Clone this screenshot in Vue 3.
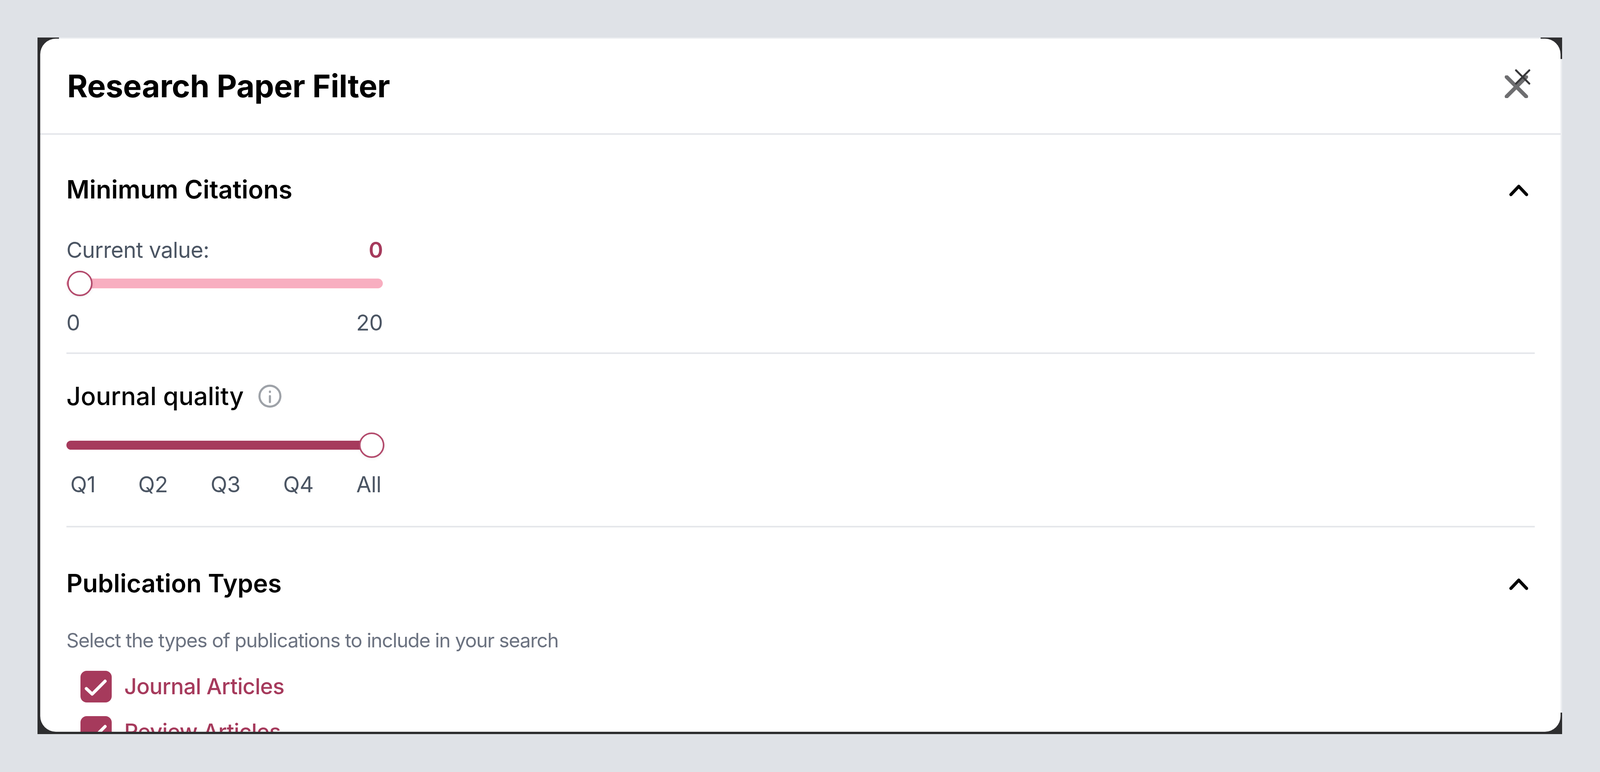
<script setup>
const types = ['Journal Articles', 'Review Articles']
const quality = ['Q1', 'Q2', 'Q3', 'Q4', 'All']
</script>

<template>
  <main class="page">
    <div class="frame">
      <section class="modal">
        <header class="modal-head">
          <h1 class="title">Research Paper Filter</h1>
          <button class="close" aria-label="Close">
            <svg class="close-big" viewBox="0 0 60 58"><path d="M5 4 55 54M55 4 5 54" /></svg>
            <svg class="close-small" viewBox="0 0 40 40"><path d="M3 3 37 37M37 3 3 37" /></svg>
          </button>
        </header>

        <div class="body">
          <div class="section-head first">
            <h2 class="heading">Minimum Citations</h2>
            <svg class="chevron" viewBox="0 0 48 32"><path d="M4 27 24 6 44 27" /></svg>
          </div>
          <div class="slider-block">
            <div class="row value-row">
              <span>Current value:</span>
              <strong class="value">0</strong>
            </div>
            <div class="slider">
              <div class="track light"></div>
              <span class="thumb at-start"></span>
            </div>
            <div class="row ends">
              <span>0</span>
              <span>20</span>
            </div>
          </div>
          <hr class="rule rule-a" />

          <div class="quality-head">
            <h2 class="heading regular">Journal quality</h2>
            <svg class="info" viewBox="0 0 56 56">
              <circle cx="28" cy="28" r="25" />
              <path d="M28 28v14M28 17v1" />
            </svg>
          </div>
          <div class="slider-block narrow">
            <div class="slider">
              <div class="track dark"></div>
              <span class="thumb at-end"></span>
            </div>
            <div class="row ticks">
              <span v-for="q in quality" :key="q">{{ q }}</span>
            </div>
          </div>
          <hr class="rule rule-b" />

          <div class="section-head pub">
            <h2 class="heading">Publication Types</h2>
            <svg class="chevron" viewBox="0 0 48 32"><path d="M4 27 24 6 44 27" /></svg>
          </div>
          <p class="hint">Select the types of publications to include in your search</p>
          <ul class="types">
            <li v-for="t in types" :key="t" class="type">
              <span class="box">
                <svg viewBox="0 0 80 80"><path d="M15 45 30 59 63 26" /></svg>
              </span>
              <span class="type-label">{{ t }}</span>
            </li>
          </ul>
        </div>
      </section>
    </div>
  </main>
</template>

<style>
html, body { margin: 0; background: #dfe2e7; }
</style>

<style scoped>
.page {
  box-sizing: border-box;
  width: 100%;
  min-height: 100vh;
  padding: 96px 97px 97px 96px;
  background: #dfe2e7;
  font-family: Inter, "Noto Sans", sans-serif;
}
.frame {
  box-sizing: border-box;
  height: 1783px;
  padding: 3px 4px 6px 7px;
  background:
    linear-gradient(#eceef1, #eceef1) top center / calc(100% - 110px) 3px no-repeat,
    linear-gradient(#eceef1, #eceef1) right center / 4px calc(100% - 110px) no-repeat,
    #2e2e30;
}
.modal {
  height: 100%;
  background: #fff;
  border-radius: 40px;
  overflow: hidden;
}
.modal-head {
  box-sizing: border-box;
  height: 246px;
  padding: 0 69px;
  display: flex;
  align-items: center;
  justify-content: space-between;
  border-bottom: 4px solid #e5e7eb;
}
.title {
  margin: 0;
  font-size: 80px;
  line-height: 100px;
  font-weight: 700;
  letter-spacing: -0.3px;
  color: #000;
}
.close {
  position: relative;
  width: 60px;
  height: 58px;
  margin-top: 4px;
  margin-right: 14px;
  padding: 0;
  border: 0;
  background: none;
}
.close svg { position: absolute; fill: none; stroke-linecap: round; }
.close-big { left: 0; top: 0; width: 60px; height: 58px; stroke: #6e6e70; stroke-width: 10; }
.close-small { left: 26px; top: -16px; width: 40px; height: 40px; stroke: #38383a; stroke-width: 5; }

.body { padding: 0 66px 0 67px; }
.section-head {
  display: flex;
  align-items: center;
  justify-content: space-between;
  height: 100px;
}
.section-head.first { margin-top: 90px; }
.section-head.pub { margin-top: 93px; }
.heading {
  margin: 0;
  font-size: 64px;
  line-height: 100px;
  font-weight: 600;
  color: #000;
}
.heading.regular { font-weight: 500; }
.chevron {
  width: 48px;
  height: 32px;
  margin-top: 4px;
  margin-right: 17px;
  fill: none;
  stroke: #000;
  stroke-width: 8;
  stroke-linecap: round;
  stroke-linejoin: round;
}

.slider-block { width: 810px; color: #4b5563; font-size: 56px; letter-spacing: -0.6px; }
.row { display: flex; justify-content: space-between; line-height: 70px; }
.value-row { margin-top: 70px; }
.value { color: #a63a5c; font-weight: 600; }
.slider { position: relative; height: 65px; margin-top: 18px; display: flex; align-items: center; }
.track { flex: 1; border-radius: 13px; }
.track.light { height: 25px; background: #f8aec0; }
.track.dark { height: 23px; background: #a63a5c; }
.thumb {
  position: absolute;
  top: 0;
  box-sizing: border-box;
  width: 65px;
  height: 65px;
  border-radius: 50%;
  background: #fff;
  border: 4px solid #b34a6c;
  box-shadow: 0 3px 8px rgba(0, 0, 0, 0.06);
}
.at-start { left: 2px; }
.at-end { right: 0; }
.ends { margin-top: 33px; }

.rule { margin: 0; border: 0; height: 4px; background: #e5e7eb; }
.rule-a { margin-top: 41px; }
.rule-b { margin-top: 71px; }

.quality-head { display: flex; align-items: center; gap: 37px; margin-top: 58px; }
.info {
  width: 60px;
  height: 60px;
  fill: none;
  stroke: #9ea2a8;
  stroke-width: 5;
  stroke-linecap: round;
}
.narrow { width: 814px; }
.narrow .slider { width: 814px; margin-top: 43px; }
.ticks { margin-top: 33px; padding: 0 8px 0 10px; }

.hint {
  margin: 56px 0 0;
  font-size: 50px;
  line-height: 80px;
  letter-spacing: -1.4px;
  color: #6b7280;
}
.types { margin: 38px 0 0 36px; padding: 0; list-style: none; }
.type { display: flex; align-items: center; gap: 32px; height: 81px; margin-bottom: 35px; }
.box {
  width: 80px;
  height: 81px;
  border-radius: 16px;
  background: #a63a5c;
}
.box svg {
  display: block;
  width: 80px;
  height: 81px;
  fill: none;
  stroke: #fff;
  stroke-width: 8;
  stroke-linecap: round;
  stroke-linejoin: round;
}
.type-label { font-size: 56px; line-height: 81px; letter-spacing: -0.75px; color: #a63a5c; font-weight: 500; }
</style>
